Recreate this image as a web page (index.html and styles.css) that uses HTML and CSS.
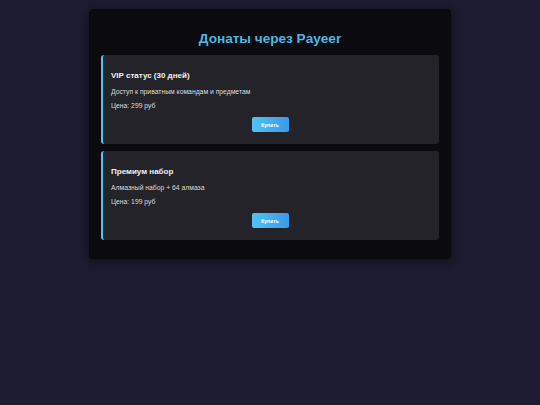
FILE: index.html
```html
<!DOCTYPE html>
<html lang="ru">
<head>
<meta charset="utf-8">
<link rel="stylesheet" href="styles.css">
</head>
<body>
<div class="container">
  <h1 class="title">Донаты через Payeer</h1>
  <div class="card">
    <h3 class="card-title">VIP статус (30 дней)</h3>
    <p class="card-text">Доступ к приватным командам и предметам</p>
    <p class="card-text price">Цена: 299 руб</p>
    <div class="actions"><button class="buy">Купить</button></div>
  </div>
  <div class="card">
    <h3 class="card-title">Премиум набор</h3>
    <p class="card-text">Алмазный набор + 64 алмаза</p>
    <p class="card-text price">Цена: 199 руб</p>
    <div class="actions"><button class="buy">Купить</button></div>
  </div>
</div>
</body>
</html>
```
FILE: styles.css
```css
html, body {
  margin: 0;
  padding: 0;
  background: #1c1b2f;
  height: 100%;
}
body {
  font-family: "Liberation Sans", Arial, sans-serif;
  padding-top: 9px;
  box-sizing: border-box;
}
.container {
  width: 362px;
  margin: 0 auto;
  background: #0a0a0f;
  border-radius: 4px;
  padding: 12px 12px 12px;
  box-sizing: border-box;
  box-shadow: 0 2px 8px rgba(0,0,0,0.45);
}
.title {
  margin: 9px 0 0;
  height: 25px;
  font-size: 13.6px;
  line-height: 17px;
  font-weight: bold;
  color: #4db6e2;
  text-align: center;
}
.card {
  background: #232329;
  border-left: 2px solid #4fc3f7;
  border-radius: 3px;
  padding: 16px 10px 12px 8px;
  margin-bottom: 7px;
}
.card-title {
  margin: 0;
  font-size: 8px;
  line-height: 10px;
  font-weight: bold;
  color: #f2f2f2;
}
.card-text {
  margin: 7px 0 0;
  font-size: 6.8px;
  line-height: 8px;
  color: #dcdcdc;
}
.price {
  margin-top: 6px;
}
.actions {
  display: flex;
  justify-content: center;
  margin-top: 7px;
}
.buy {
  width: 37px;
  height: 15px;
  border: none;
  border-radius: 2px;
  background: linear-gradient(90deg, #4fc3f7, #3a9ae8);
  color: #ffffff;
  font-family: "Liberation Sans", Arial, sans-serif;
  font-size: 5px;
  font-weight: bold;
  padding: 0;
}
```
